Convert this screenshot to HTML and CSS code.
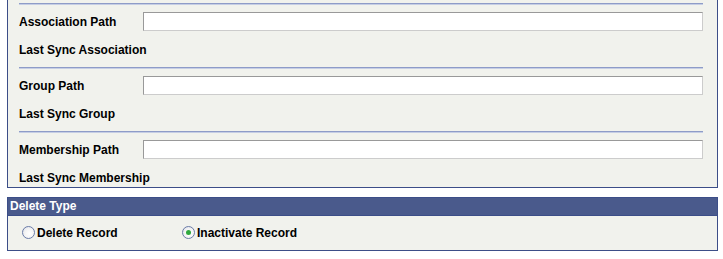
FILE: index.html
```html
<!DOCTYPE html>
<html>
<head>
<meta charset="utf-8">
<link rel="stylesheet" href="styles.css">
</head>
<body>
<div class="box paths">
  <div class="section">
    <div class="sep"></div>
    <div class="row"><span class="label">Association Path</span><span class="input"></span></div>
    <div class="row2"><span class="label2">Last Sync Association</span></div>
  </div>
  <div class="section">
    <div class="sep"></div>
    <div class="row"><span class="label">Group Path</span><span class="input"></span></div>
    <div class="row2"><span class="label2">Last Sync Group</span></div>
  </div>
  <div class="section last">
    <div class="sep"></div>
    <div class="row"><span class="label">Membership Path</span><span class="input"></span></div>
    <div class="row2"><span class="label2">Last Sync Membership</span></div>
  </div>
</div>
<div class="box delete">
  <div class="header">Delete Type</div>
  <div class="radios">
    <label class="opt first"><span class="radio"></span>Delete Record</label>
    <label class="opt"><span class="radio on"></span>Inactivate Record</label>
  </div>
</div>
</body>
</html>
```
FILE: styles.css
```css
html, body { margin: 0; padding: 0; background: #ffffff; }
body { font-family: "Liberation Sans", Arial, sans-serif; font-size: 12px; font-weight: bold; color: #000; }
.box {
  box-sizing: border-box;
  margin-left: 7px;
  width: 711px;
  background: #f1f2ed;
  border: 1px solid #3c4e88;
}
.paths { border-top: none; padding: 3px 14px 2px 11px; }
.sep { height: 1px; border-top: 1px solid #8e9cc8; background: #c6cee4; }
.row { display: flex; align-items: center; margin-top: 7px; height: 19px; }
.label { width: 124px; line-height: 14px; flex: none; white-space: nowrap; }
.label2 { line-height: 14px; white-space: nowrap; }
.input {
  flex: 1;
  height: 17px;
  background: #ffffff;
  border: 1px solid #cccccc;
  border-top-color: #999999;
  border-left-color: #999999;
}
.row2 { margin-top: 12px; height: 14px; margin-bottom: 10px; display: flex; align-items: center; }
.section.last .row2 { margin-bottom: 0; }
.delete { margin-top: 9px; }
.header {
  background: #4a5a8c;
  color: #ffffff;
  height: 17px;
  line-height: 17px;
  padding-left: 2px;
  border-bottom: 1px solid #3c4e88;
}
.radios { display: flex; align-items: center; padding: 9px 0 10px 14px; height: 15px; }
.opt { display: flex; align-items: center; white-space: nowrap; }
.opt.first { width: 160px; }
.radio {
  width: 11px; height: 11px;
  border: 1px solid #6a7ca8;
  border-radius: 50%;
  background: radial-gradient(circle at 60% 60%, #ffffff 0%, #f4f4f4 50%, #d8dbe4 100%);
  margin-right: 2px;
  position: relative;
  box-sizing: content-box;
}
.radio.on::after {
  content: "";
  position: absolute;
  left: 3px; top: 3px;
  width: 5px; height: 5px;
  border-radius: 50%;
  background: #2fa83e;
}
```
